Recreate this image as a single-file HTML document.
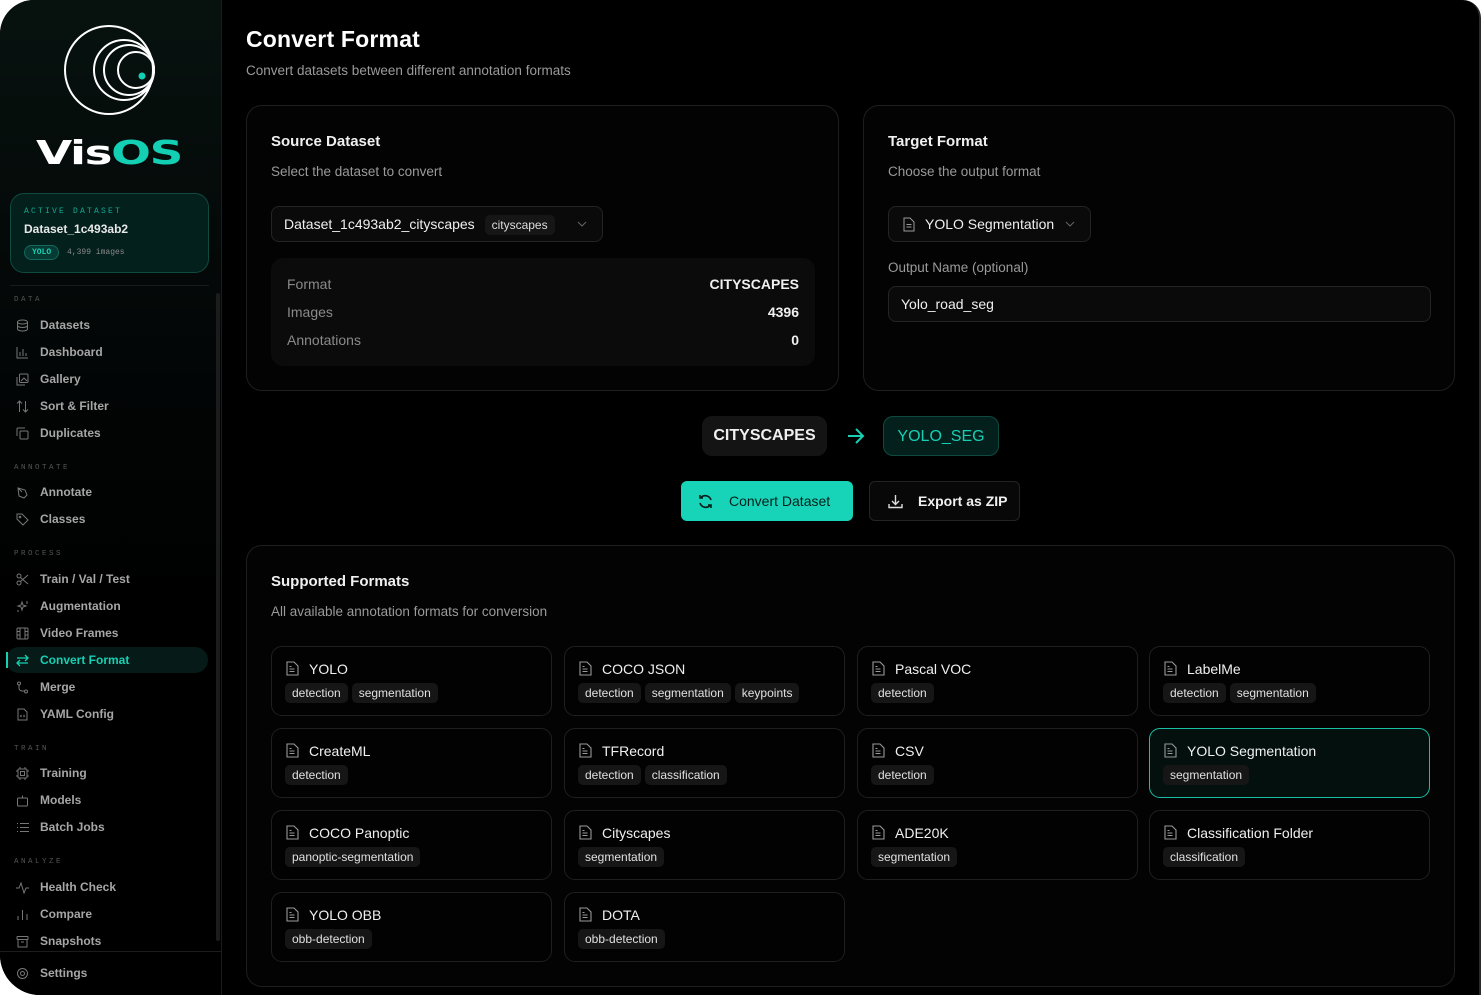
<!DOCTYPE html>
<html><head><meta charset="utf-8"><style>
*{box-sizing:border-box;margin:0;padding:0}
html,body{width:1483px;height:995px;background:#fff;overflow:hidden;font-family:"Liberation Sans",sans-serif}
.frame{position:absolute;left:0;top:0;width:1481px;height:995px;background:#000;border-radius:34px 18px 0 40px;overflow:hidden;border-right:2px solid #2a2a2a}
.side{position:absolute;left:0;top:0;width:222px;height:995px;background:linear-gradient(180deg,#07120f 0%,#030606 35%,#000 60%);border-right:1px solid #1c1c1c}
.logo{position:absolute;left:64px;top:25px}
.brand{position:absolute;left:36px;top:133px;font-size:33px;font-weight:900;letter-spacing:-1px;color:#fff;font-family:"DejaVu Sans","Liberation Sans",sans-serif;transform:scaleX(1.42);transform-origin:left}
.brand span{color:#13cfb3}
.active{position:absolute;left:10px;top:193px;width:199px;height:80px;border:1px solid #0f4a40;border-radius:14px;background:#04201c}
.active .l{position:absolute;left:13px;top:13px;font-size:8px;letter-spacing:2.2px;color:#13a890;font-family:"Liberation Mono",monospace}
.active .n{position:absolute;left:13px;top:28px;font-size:12px;font-weight:bold;color:#e8e8e8}
.active .b{position:absolute;left:13px;top:51px;height:15px;padding:0 7px;border:1px solid #126a5c;border-radius:8px;font-size:8px;font-weight:bold;line-height:13px;color:#17d0b4;background:#063a33;font-family:"Liberation Mono",monospace}
.active .c{position:absolute;left:56px;top:54px;font-size:8px;color:#8a8a8a;font-family:"Liberation Mono",monospace}
.sep{position:absolute;left:10px;top:285px;width:199px;height:1px;background:#1a1a1a}
.sec{position:absolute;left:14px;font-size:7.5px;letter-spacing:2.5px;color:#555;font-family:"Liberation Mono",monospace}
.it{position:absolute;left:16px;font-size:12px;font-weight:bold;color:#a6a6a6;height:14px;line-height:14px}
.it svg{position:absolute;left:0;top:1px}
.it span{position:absolute;left:24px;white-space:nowrap}
.it.on{color:#17d0b4}
.onbg{position:absolute;left:6px;top:647px;width:202px;height:26px;border-radius:13px;background:#061a17}
.onbar{position:absolute;left:6px;top:652px;width:2px;height:16px;background:#17d0b4}
.scroll{position:absolute;left:216px;top:293px;width:4px;height:648px;background:#1c1c1c;border-radius:2px}
.sbot{position:absolute;left:0;top:951px;width:221px;height:1px;background:#1c1c1c}
.main{position:absolute;left:222px;top:0;right:0;bottom:0}
h1{position:absolute;left:24px;top:26px;font-size:23px;font-weight:bold;color:#fff;letter-spacing:.2px}
.sub{position:absolute;left:24px;top:63px;font-size:13.5px;color:#9a9a9a}
.card{position:absolute;border:1px solid #1e1e1e;border-radius:16px;background:#030303}
.ct{position:absolute;left:24px;top:27px;font-size:15px;font-weight:bold;color:#f0f0f0}
.cs{position:absolute;left:24px;top:58px;font-size:13.5px;color:#9a9a9a}
.sel{position:absolute;border:1px solid #242424;border-radius:8px;background:#0a0a0a;height:36px;font-size:14px;color:#f0f0f0;line-height:34px}
.chip{display:inline-block;background:#161616;border-radius:5px;font-size:12px;padding:0 7px;line-height:20px;color:#ddd}
.info{position:absolute;left:24px;top:152px;width:544px;height:108px;background:#0b0b0b;border-radius:12px;font-size:14px}
.row{position:absolute;left:16px;right:16px;color:#8a8a8a}
.row b{position:absolute;right:0;top:0;color:#f0f0f0;font-weight:bold}
.pill{position:absolute;height:40px;border-radius:10px;font-size:16px;line-height:40px;text-align:center}
.btn{position:absolute;height:40px;border-radius:6px;font-size:14px;line-height:40px}
.tile{position:absolute;width:281px;height:70px;border:1px solid #1f1f1f;border-radius:11px;background:#020202}
.tile.sel2{border-color:#17bfa5;background:#03100e}
.tile svg{position:absolute;left:14px;top:14px}
.tile .t{position:absolute;left:37px;top:14px;font-size:14px;color:#f0f0f0}
.tile .tg{position:absolute;left:13px;top:36px;font-size:12px}
.tile .tg .chip{margin-right:4px;color:#e0e0e0}
</style></head><body>
<div class="frame">
<div class="side">
<svg class="logo" width="92" height="92" viewBox="0 0 92 92" fill="none" stroke="#fff" stroke-width="2"><circle cx="45" cy="45" r="44"/><circle cx="60" cy="45" r="30"/><circle cx="65" cy="45" r="25"/><circle cx="72" cy="45" r="18"/><circle cx="78" cy="51" r="3.5" fill="#13cfb3" stroke="none"/></svg>
<div class="brand">Vis<span>OS</span></div>
<div class="active"><div class="l">ACTIVE DATASET</div><div class="n">Dataset_1c493ab2</div><div class="b">YOLO</div><div class="c">4,399 images</div></div>
<div class="sep"></div>
<div class="scroll"></div>
<div class="sec" style="top:296px">DATA</div>
<div class="sec" style="top:464px">ANNOTATE</div>
<div class="sec" style="top:550px">PROCESS</div>
<div class="sec" style="top:745px">TRAIN</div>
<div class="sec" style="top:858px">ANALYZE</div>
<div class="onbg"></div><div class="onbar"></div>
<div class="it" style="top:318px"><svg width="13" height="13" viewBox="0 0 13 13" fill="none" stroke="#777"><ellipse cx="6.5" cy="3" rx="5" ry="2"/><path d="M1.5 3v7c0 1 2 2 5 2s5-1 5-2V3M1.5 6.5c0 1 2 2 5 2s5-1 5-2"/></svg><span>Datasets</span></div>
<div class="it" style="top:345px"><svg width="13" height="13" viewBox="0 0 13 13" fill="none" stroke="#777"><path d="M1 1v11h11M4 10V6M7 10V3M10 10V7"/></svg><span>Dashboard</span></div>
<div class="it" style="top:372px"><svg width="13" height="13" viewBox="0 0 13 13" fill="none" stroke="#777"><rect x="3.5" y="1" width="8.5" height="8.5" rx="1"/><path d="M1 4v8h8M5 8l3-3 3 3"/></svg><span>Gallery</span></div>
<div class="it" style="top:399px"><svg width="13" height="13" viewBox="0 0 13 13" fill="none" stroke="#777"><path d="M3.5 12V1M1 3.5l2.5-2.5 2.5 2.5M9.5 1v11M7 9.5l2.5 2.5 2.5-2.5"/></svg><span>Sort &amp; Filter</span></div>
<div class="it" style="top:426px"><svg width="13" height="13" viewBox="0 0 13 13" fill="none" stroke="#777"><rect x="4" y="4" width="8" height="8" rx="1"/><path d="M1 9V2a1 1 0 0 1 1-1h7"/></svg><span>Duplicates</span></div>
<div class="it" style="top:485px"><svg width="13" height="13" viewBox="0 0 13 13" fill="none" stroke="#777"><path d="M2 2l7 2 2 5-3 3-5-2zM2 2l4 4"/></svg><span>Annotate</span></div>
<div class="it" style="top:512px"><svg width="13" height="13" viewBox="0 0 13 13" fill="none" stroke="#777"><path d="M1 1h5l6 6-5 5-6-6z"/><circle cx="4" cy="4" r=".8"/></svg><span>Classes</span></div>
<div class="it" style="top:572px"><svg width="13" height="13" viewBox="0 0 13 13" fill="none" stroke="#777"><circle cx="3" cy="3" r="2"/><circle cx="3" cy="10" r="2"/><path d="M4.5 4.5L12 11M4.5 8.5L12 2"/></svg><span>Train / Val / Test</span></div>
<div class="it" style="top:599px"><svg width="13" height="13" viewBox="0 0 13 13" fill="none" stroke="#777"><path d="M6 2l1 3 3 1-3 1-1 3-1-3-3-1 3-1zM11 1v3M2 10v2"/></svg><span>Augmentation</span></div>
<div class="it" style="top:626px"><svg width="13" height="13" viewBox="0 0 13 13" fill="none" stroke="#777"><rect x="1" y="1" width="11" height="11" rx="1"/><path d="M4 1v11M9 1v11M1 4.5h3M1 8h3M9 4.5h3M9 8h3"/></svg><span>Video Frames</span></div>
<div class="it on" style="top:653px"><svg width="13" height="13" viewBox="0 0 13 13" fill="none" stroke="#17d0b4" stroke-width="1.3"><path d="M1 4h11M9 1l3 3-3 3M12 9H1M4 6l-3 3 3 3"/></svg><span>Convert Format</span></div>
<div class="it" style="top:680px"><svg width="13" height="13" viewBox="0 0 13 13" fill="none" stroke="#777"><circle cx="3" cy="2.5" r="1.5"/><circle cx="10" cy="10.5" r="1.5"/><path d="M3 4v3a3 3 0 0 0 3 3h2.5"/></svg><span>Merge</span></div>
<div class="it" style="top:707px"><svg width="13" height="13" viewBox="0 0 13 13" fill="none" stroke="#777"><path d="M2 1h6l3 3v8H2z"/><path d="M5.5 7l-1 1 1 1M7.5 7l1 1-1 1"/></svg><span>YAML Config</span></div>
<div class="it" style="top:766px"><svg width="13" height="13" viewBox="0 0 13 13" fill="none" stroke="#777"><rect x="2" y="2" width="9" height="9" rx="1"/><rect x="4.5" y="4.5" width="4" height="4"/><path d="M4 0v2M9 0v2M4 11v2M9 11v2M0 4h2M0 9h2M11 4h2M11 9h2"/></svg><span>Training</span></div>
<div class="it" style="top:793px"><svg width="13" height="13" viewBox="0 0 13 13" fill="none" stroke="#777"><rect x="1.5" y="4" width="10" height="8" rx="1"/><path d="M6.5 4V1.5M4.5 8h.1M8.5 8h.1"/></svg><span>Models</span></div>
<div class="it" style="top:820px"><svg width="13" height="13" viewBox="0 0 13 13" fill="none" stroke="#777"><path d="M4 2.5h9M4 6.5h9M4 10.5h9M1 2.5h1M1 6.5h1M1 10.5h1"/></svg><span>Batch Jobs</span></div>
<div class="it" style="top:880px"><svg width="13" height="13" viewBox="0 0 13 13" fill="none" stroke="#777"><path d="M0 7h3l2-5 3 10 2-5h3"/></svg><span>Health Check</span></div>
<div class="it" style="top:907px"><svg width="13" height="13" viewBox="0 0 13 13" fill="none" stroke="#777"><path d="M2 12V8M6.5 12V2M11 12V6"/></svg><span>Compare</span></div>
<div class="it" style="top:934px"><svg width="13" height="13" viewBox="0 0 13 13" fill="none" stroke="#777"><rect x="1" y="1.5" width="11" height="3" rx=".5"/><path d="M2 4.5V12h9V4.5M5 7h3"/></svg><span>Snapshots</span></div>
<div class="sbot"></div>
<div class="it" style="top:966px"><svg width="13" height="13" viewBox="0 0 13 13" fill="none" stroke="#777"><circle cx="6.5" cy="6.5" r="2"/><circle cx="6.5" cy="6.5" r="5"/></svg><span>Settings</span></div>
</div>

<div class="main">
<h1>Convert Format</h1>
<div class="sub">Convert datasets between different annotation formats</div>

<div class="card" style="left:24px;top:105px;width:593px;height:286px">
<div class="ct">Source Dataset</div><div class="cs">Select the dataset to convert</div>
<div class="sel" style="left:24px;top:100px;width:332px;padding-left:12px">Dataset_1c493ab2_cityscapes <span class="chip" style="margin-left:6px">cityscapes</span><svg style="position:absolute;left:305px;top:14px" width="10" height="6" viewBox="0 0 10 6" fill="none" stroke="#666"><path d="M1 1l4 4 4-4"/></svg></div>
<div class="info">
<div class="row" style="top:18px">Format<b>CITYSCAPES</b></div>
<div class="row" style="top:46px">Images<b>4396</b></div>
<div class="row" style="top:74px">Annotations<b>0</b></div>
</div>
</div>

<div class="card" style="left:641px;top:105px;width:592px;height:286px">
<div class="ct">Target Format</div><div class="cs">Choose the output format</div>
<div class="sel" style="left:24px;top:100px;width:203px;padding-left:36px">YOLO Segmentation<svg style="position:absolute;left:14px;top:10px" width="12" height="15" viewBox="0 0 12 15" fill="none" stroke="#999"><path d="M1 1h6l4 4v9H1z"/><path d="M3.5 7.5h5M3.5 10h5"/></svg><svg style="position:absolute;left:176px;top:14px" width="10" height="6" viewBox="0 0 10 6" fill="none" stroke="#666"><path d="M1 1l4 4 4-4"/></svg></div>
<div class="cs" style="top:154px">Output Name (optional)</div>
<div class="sel" style="left:24px;top:180px;width:543px;padding-left:12px">Yolo_road_seg</div>
</div>

<div class="pill" style="left:480px;top:416px;width:125px;background:#141414;color:#f0f0f0;font-weight:bold">CITYSCAPES</div>
<svg style="position:absolute;left:625px;top:428px" width="18" height="16" viewBox="0 0 18 16" fill="none" stroke="#17d0b4" stroke-width="2"><path d="M1 8h15M9 1l7 7-7 7"/></svg>
<div class="pill" style="left:661px;top:416px;width:116px;background:#04201c;border:1px solid #0f4a40;color:#17d0b4">YOLO_SEG</div>

<div class="btn" style="left:459px;top:481px;width:172px;background:#17d3b7;color:#05201c;padding-left:48px">Convert Dataset<svg style="position:absolute;left:17px;top:13px" width="15" height="15" viewBox="0 0 15 15" fill="none" stroke="#05201c" stroke-width="1.6"><path d="M13 6A6 6 0 0 0 2.5 4M2 1v3h3M2 9a6 6 0 0 0 10.5 2M13 14v-3h-3"/></svg></div>
<div class="btn" style="left:647px;top:481px;width:151px;background:#080808;border:1px solid #242424;color:#f0f0f0;padding-left:48px;line-height:38px;font-weight:bold">Export as ZIP<svg style="position:absolute;left:18px;top:12px" width="15" height="15" viewBox="0 0 15 15" fill="none" stroke="#ddd" stroke-width="1.4"><path d="M7.5 1v9M4 7l3.5 3.5L11 7M1 10v3.5h13V10"/></svg></div>

<div class="card" style="left:24px;top:545px;width:1209px;height:442px">
<div class="ct">Supported Formats</div><div class="cs">All available annotation formats for conversion</div>
</div>
</div>
</div>
<svg width="0" height="0" style="position:absolute"><defs><g id="fi" fill="none" stroke="#999" stroke-width="1.1"><path d="M1 1h7l4 4v9H1z"/><path d="M3.5 8h5M3.5 10.5h5M3.5 5.5h2"/></g></defs></svg>
<div style="position:absolute;left:0;top:0">
<div class="tile" style="left:271px;top:646px"><svg width="13" height="15"><use href="#fi"/></svg><div class="t">YOLO</div><div class="tg"><span class="chip">detection</span><span class="chip">segmentation</span></div></div>
<div class="tile" style="left:564px;top:646px"><svg width="13" height="15"><use href="#fi"/></svg><div class="t">COCO JSON</div><div class="tg"><span class="chip">detection</span><span class="chip">segmentation</span><span class="chip">keypoints</span></div></div>
<div class="tile" style="left:857px;top:646px"><svg width="13" height="15"><use href="#fi"/></svg><div class="t">Pascal VOC</div><div class="tg"><span class="chip">detection</span></div></div>
<div class="tile" style="left:1149px;top:646px"><svg width="13" height="15"><use href="#fi"/></svg><div class="t">LabelMe</div><div class="tg"><span class="chip">detection</span><span class="chip">segmentation</span></div></div>
<div class="tile" style="left:271px;top:728px"><svg width="13" height="15"><use href="#fi"/></svg><div class="t">CreateML</div><div class="tg"><span class="chip">detection</span></div></div>
<div class="tile" style="left:564px;top:728px"><svg width="13" height="15"><use href="#fi"/></svg><div class="t">TFRecord</div><div class="tg"><span class="chip">detection</span><span class="chip">classification</span></div></div>
<div class="tile" style="left:857px;top:728px"><svg width="13" height="15"><use href="#fi"/></svg><div class="t">CSV</div><div class="tg"><span class="chip">detection</span></div></div>
<div class="tile sel2" style="left:1149px;top:728px"><svg width="13" height="15"><use href="#fi"/></svg><div class="t">YOLO Segmentation</div><div class="tg"><span class="chip">segmentation</span></div></div>
<div class="tile" style="left:271px;top:810px"><svg width="13" height="15"><use href="#fi"/></svg><div class="t">COCO Panoptic</div><div class="tg"><span class="chip">panoptic-segmentation</span></div></div>
<div class="tile" style="left:564px;top:810px"><svg width="13" height="15"><use href="#fi"/></svg><div class="t">Cityscapes</div><div class="tg"><span class="chip">segmentation</span></div></div>
<div class="tile" style="left:857px;top:810px"><svg width="13" height="15"><use href="#fi"/></svg><div class="t">ADE20K</div><div class="tg"><span class="chip">segmentation</span></div></div>
<div class="tile" style="left:1149px;top:810px"><svg width="13" height="15"><use href="#fi"/></svg><div class="t">Classification Folder</div><div class="tg"><span class="chip">classification</span></div></div>
<div class="tile" style="left:271px;top:892px"><svg width="13" height="15"><use href="#fi"/></svg><div class="t">YOLO OBB</div><div class="tg"><span class="chip">obb-detection</span></div></div>
<div class="tile" style="left:564px;top:892px"><svg width="13" height="15"><use href="#fi"/></svg><div class="t">DOTA</div><div class="tg"><span class="chip">obb-detection</span></div></div>
</div>
</body></html>
